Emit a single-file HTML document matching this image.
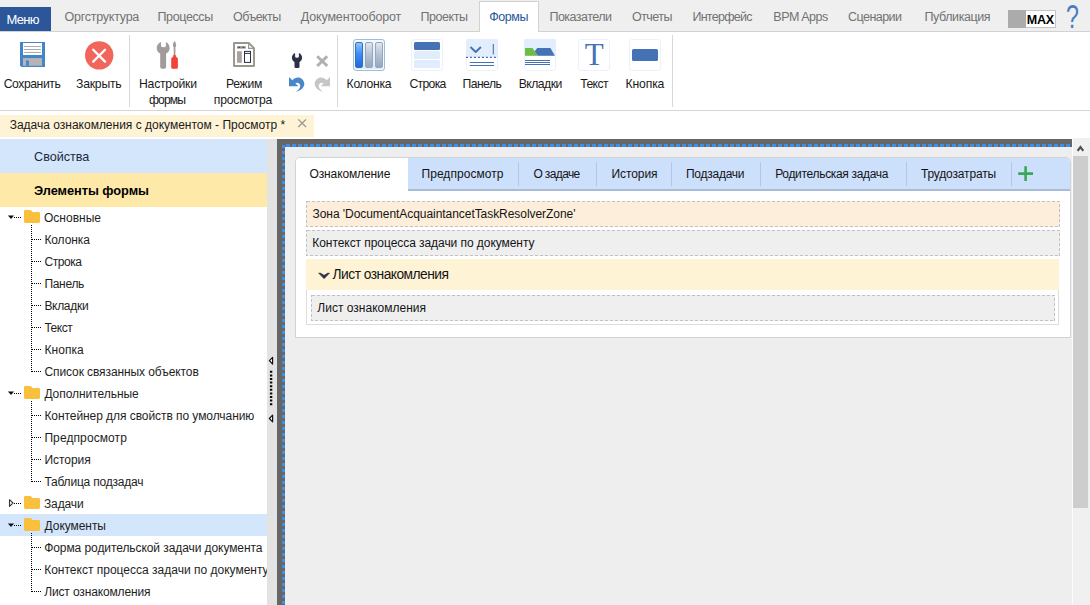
<!DOCTYPE html>
<html lang="ru">
<head>
<meta charset="utf-8">
<title>Задача ознакомления с документом - Просмотр</title>
<style>
*{box-sizing:border-box;margin:0;padding:0}
html,body{width:1090px;height:605px;overflow:hidden;background:#fff}
body{position:relative;font-family:"Liberation Sans",sans-serif;font-size:12px;color:#1e1e1e}
.a{position:absolute}
svg{position:absolute;overflow:visible}
.t{position:absolute;white-space:nowrap;line-height:normal}
#nav{left:0;top:0;width:1090px;height:32px;background:#efefef;border-bottom:1px solid #d2d2d2}
#menu{left:0;top:7px;width:51px;height:24px;background:#2b579a}
#actab{left:479px;top:1px;width:60px;height:31px;background:#fff;border:1px solid #d2d2d2;border-bottom:none}
#maxg{left:1008px;top:10px;width:48px;height:18px;background:#fff;border:1px solid #c4c4c4}
#maxg i{position:absolute;left:-1px;top:-1px;width:18px;height:18px;background:#ababab}
#rib{left:0;top:32px;width:1090px;height:79px;background:#fff;border-bottom:1px solid #d6d6d6}
.sep{top:35px;width:1px;height:72px;background:#d8d8d8}
.ib{top:39px;width:32px;height:32px;border:1px solid #ebf2fc;border-radius:3px;background:#fff;overflow:hidden}
#dtab{left:0;top:115px;width:314px;height:22px;background:#fff3d6}
#props{left:0;top:139px;width:267px;height:34px;background:#d4e6fc}
#elems{left:0;top:173px;width:267px;height:34px;background:#fee9a9}
#selrow{left:0;top:514px;width:267px;height:22px;background:#d4e6fc}
#split{left:267px;top:139px;width:10px;height:466px;background:#e3e3e3}
#cv{left:277px;top:139px;width:795px;height:466px;background:#eeeeee}
#sb{left:1072px;top:138px;width:18px;height:467px;background:#f0f0f0;border-left:1px solid #fcfcfc}
#sbth{left:1073px;top:156px;width:15px;height:351.6px;background:#cdcdcd}
#tp{left:295px;top:157px;width:776px;height:181px;background:#fff;border:1px solid #d0d3d8;border-radius:5px 5px 0 0}
#th{left:296px;top:158px;width:774px;height:33px;background:#cce0fc;border-bottom:2px solid #aabcd5;border-radius:4px 4px 0 0}
#ta{left:296px;top:158px;width:112px;height:33px;background:#fff;border-radius:4px 0 0 0}
.ts{top:162px;width:1px;height:24px;background:#b4c6e0}
.bx{left:306px;width:754px;height:26px}
</style>
</head>
<body>
<header>
<nav aria-label="Главное меню">
<div id="nav" class="a"></div>
<div id="menu" class="a"></div>
<div id="actab" class="a"></div>
<div id="maxg" class="a"><i></i></div>
<span class="t" id="t0" style="left:6.6px;top:12.00px;font-size:13px;color:#ffffff;letter-spacing:-0.714px;">Меню</span>
<span class="t" id="t1" style="left:64.5px;top:10.00px;font-size:12.5px;color:#727272;letter-spacing:-0.244px;">Оргструктура</span>
<span class="t" id="t2" style="left:157.5px;top:10.00px;font-size:12.5px;color:#727272;letter-spacing:-0.378px;">Процессы</span>
<span class="t" id="t3" style="left:233.0px;top:10.00px;font-size:12.5px;color:#727272;letter-spacing:-0.544px;">Объекты</span>
<span class="t" id="t4" style="left:300.8px;top:10.00px;font-size:12.5px;color:#727272;letter-spacing:-0.163px;">Документооборот</span>
<span class="t" id="t5" style="left:420.6px;top:10.00px;font-size:12.5px;color:#727272;letter-spacing:-0.462px;">Проекты</span>
<span class="t" id="t6" style="left:549.5px;top:10.00px;font-size:12.5px;color:#727272;letter-spacing:-0.535px;">Показатели</span>
<span class="t" id="t7" style="left:632.0px;top:10.00px;font-size:12.5px;color:#727272;letter-spacing:-0.544px;">Отчеты</span>
<span class="t" id="t8" style="left:692.4px;top:10.00px;font-size:12.5px;color:#727272;letter-spacing:-0.707px;">Интерфейс</span>
<span class="t" id="t9" style="left:773.3px;top:10.00px;font-size:12.5px;color:#727272;letter-spacing:-0.496px;">BPM Apps</span>
<span class="t" id="t10" style="left:848.0px;top:10.00px;font-size:12.5px;color:#727272;letter-spacing:-0.540px;">Сценарии</span>
<span class="t" id="t11" style="left:924.5px;top:10.00px;font-size:12.5px;color:#727272;letter-spacing:-0.418px;">Публикация</span>
<span class="t" id="t12" style="left:489.2px;top:10.00px;font-size:12.5px;color:#2b579a;letter-spacing:-0.425px;">Формы</span>
<span class="t" id="t13" style="left:1026.8px;top:13.00px;font-size:12.5px;color:#000;font-weight:700;letter-spacing:-0.191px;">MAX</span>
<span class="t" id="t14" style="left:1066.3px;top:-3.40px;font-size:34px;color:#4a7cc4;letter-spacing:0.000px;transform:scaleX(0.682);transform-origin:0 0;">?</span>
</nav>
<section aria-label="Лента">
<div id="rib" class="a"></div>
<div class="a sep" style="left:129px"></div>
<div class="a sep" style="left:337px"></div>
<div class="a sep" style="left:672px"></div>
<svg width="1090" height="112" viewBox="0 0 1090 112" style="left:0;top:0">
<g><path d="M20 42 H45 V67 H21.6 L20 65.4 Z" fill="#4285c8"/><rect x="23" y="43" width="19" height="12" fill="#fff"/><rect x="24.1" y="46" width="16.8" height="1" fill="#a9a9b0"/><rect x="24.1" y="49" width="16.8" height="1" fill="#a9a9b0"/><rect x="24.1" y="52" width="16.8" height="1" fill="#a9a9b0"/><rect x="23" y="58.1" width="19" height="7.7" fill="#b5b5b9"/><rect x="26.1" y="60.4" width="2.8" height="5.4" fill="#4285c8"/></g>
<g><circle cx="99.2" cy="55.35" r="14.2" fill="#f1655a"/><path d="M93.2 49.8 L105 61.6 M105 49.8 L93.2 61.6" stroke="#fff" stroke-width="2.3" stroke-linecap="round"/></g>
<g fill="#a19c9a"><path d="M161 41.9 C158.3 43 156.7 45.4 156.7 48 C156.7 50.6 158.2 52.6 160.2 53.6 L160.2 67 Q160.2 68.7 161.9 68.7 L164.4 68.7 Q166.1 68.7 166.1 67 L166.1 53.6 C168.1 52.6 169.7 50.6 169.7 48 C169.7 45.4 168.1 43 165.9 41.9 L165.9 45.8 Q165.9 47.3 163.45 47.3 Q161 47.3 161 45.8 Z"/><path d="M174.55 41 C175.6 42.5 176.3 44 176.2 45.2 C176.1 46.2 175.7 46.8 175.4 47.3 L175.4 55.2 L173.7 55.2 L173.7 47.3 C173.4 46.8 173 46.2 172.9 45.2 C172.8 44 173.5 42.5 174.55 41 Z"/></g><path d="M173.3 54.9 L175.8 54.9 L175.8 56.2 L177.9 58.6 L177.9 67.2 Q177.9 68.7 176.4 68.7 L172.7 68.7 Q171.2 68.7 171.2 67.2 L171.2 58.6 L173.3 56.2 Z" fill="#f44336"/>
<g><path d="M234 43 L248.8 43 L254 48.2 L254 66 L234 66 Z" fill="#fff" stroke="#9a968c" stroke-width="1.9" stroke-linejoin="round"/><path d="M248.6 43 L248.6 48.4 L254 48.4" fill="none" stroke="#9a968c" stroke-width="1.2" stroke-linejoin="round"/><rect x="237" y="46.1" width="8.8" height="2.5" fill="#9a968c"/><rect x="238.3" y="46.9" width="1.7" height="1" fill="#3a4270"/><rect x="242.6" y="46.9" width="1.7" height="1" fill="#3a4270"/><rect x="237" y="51.2" width="4.8" height="11.6" fill="#a8a3a0"/><rect x="244.5" y="51.4" width="6" height="11" fill="#fff" stroke="#2b2f4a" stroke-width="1"/><path d="M244.5 53.4 H250.5" stroke="#2b2f4a" stroke-width="1"/></g>
<path d="M295.1 53 C293.1 53.9 291.9 55.7 291.9 57.7 C291.9 59.6 293 61.1 294.5 61.9 L294.5 66.8 Q294.5 68 295.7 68 L298.3 68 Q299.5 68 299.5 66.8 L299.5 61.9 C301 61.1 302.1 59.6 302.1 57.7 C302.1 55.7 300.9 53.9 298.9 53 L298.9 56.6 Q298.9 57.8 297 57.8 Q295.1 57.8 295.1 56.6 Z" fill="#2d3047"/>
<path d="M317.2 56.2 L327.2 66 M327.2 56.2 L317.2 66" stroke="#b1b1b1" stroke-width="3"/>
<path d="M289 77 L289 86.3 L298.4 86.3 L295.3 83.2 C297.4 81.9 300 83 300.2 85.6 C300.4 88 298.6 90.2 296 91.7 C300.8 90.8 304.5 87.6 304.3 83.6 C304 78 297 74.8 292.3 80.3 Z" fill="#4a87c9"/>
<path d="M289 77 L289 86.3 L298.4 86.3 L295.3 83.2 C297.4 81.9 300 83 300.2 85.6 C300.4 88 298.6 90.2 296 91.7 C300.8 90.8 304.5 87.6 304.3 83.6 C304 78 297 74.8 292.3 80.3 Z" fill="#c6c6c6" transform="translate(619 0) scale(-1 1)"/>
</svg>
<div class="a ib" style="left:353px;background:linear-gradient(#f1f7fe,#dbeafb);border-color:#9ebdd9;border-radius:3px;box-shadow:inset 0 0 0 1px #f4f9ff"></div><div class="a" style="left:355px;top:42px;width:8px;height:26px;border-radius:2px;background:linear-gradient(#90c3ff,#3d8dfb 45%,#1f68db);border:1px solid #3c6fae"></div><div class="a" style="left:365px;top:42px;width:8px;height:26px;border-radius:2px;background:linear-gradient(#e0e6ed,#b4c1d2 50%,#94a8c1);border:1px solid #93a7bf"></div><div class="a" style="left:375px;top:42px;width:8px;height:26px;border-radius:2px;background:linear-gradient(#e0e6ed,#b4c1d2 50%,#94a8c1);border:1px solid #93a7bf"></div>
<div class="a ib" style="left:411px"></div><div class="a" style="left:414px;top:42px;width:26px;height:8px;border-radius:1.5px;background:#4472b4"></div><div class="a" style="left:414px;top:51.2px;width:26px;height:7.7px;border-radius:1.5px;background:#e1edfc"></div><div class="a" style="left:414px;top:60.1px;width:26px;height:7.7px;border-radius:1.5px;background:#e1edfc"></div>
<div class="a ib" style="left:466px"></div><div class="a" style="left:466px;top:39px;width:32px;height:18px;background:#e3eefc;border-radius:2px 2px 0 0"></div><svg width="32" height="32" viewBox="0 0 32 32" style="left:466px;top:39px"><path d="M4.5 8 L9.7 13 L14.9 8" fill="none" stroke="#4472b4" stroke-width="1.9" stroke-linejoin="round"/><path d="M27.3 5 V15.5" stroke="#4472b4" stroke-width="1.1"/><path d="M-0.1 18.3 H32" stroke="#3f6db0" stroke-width="1.2" stroke-dasharray="2 2"/><path d="M3.8 23.5 H28 M3.8 26.5 H28" stroke="#4472b4" stroke-width="1.2"/></svg>
<div class="a ib" style="left:524px"></div><div class="a" style="left:524px;top:39px;width:32px;height:17px;background:#e3eefc;border-radius:2px 2px 0 0"></div><svg width="32" height="32" viewBox="0 0 32 32" style="left:524px;top:39px"><path d="M1 8.9 H8.5 L13.9 16.7 H1 Z" fill="#6cbd45"/><path d="M13.3 8.9 H26.4 L30.9 16.7 H13.9 L10.7 12.2 Z" fill="#4472b4"/><path d="M1 21.5 H25.8 M1 23.5 H25.8 M1 25.5 H25.8" stroke="#4472b4" stroke-width="1" shape-rendering="crispEdges"/></svg>
<div class="a ib" style="left:578px"></div>
<div class="a ib" style="left:629px"></div><div class="a" style="left:632px;top:49px;width:26px;height:12px;border-radius:1.5px;background:#4472b4"></div>
<span class="t" id="t15" style="left:3.7px;top:77.00px;font-size:12.2px;color:#1a1a1a;letter-spacing:-0.433px;">Сохранить</span>
<span class="t" id="t16" style="left:76.0px;top:77.00px;font-size:12.2px;color:#1a1a1a;letter-spacing:-0.209px;">Закрыть</span>
<span class="t" id="t17" style="left:139.0px;top:77.00px;font-size:12.2px;color:#1a1a1a;letter-spacing:-0.221px;">Настройки</span>
<span class="t" id="t18" style="left:149.0px;top:93.00px;font-size:12.2px;color:#1a1a1a;letter-spacing:-0.934px;">формы</span>
<span class="t" id="t19" style="left:226.0px;top:77.00px;font-size:12.2px;color:#1a1a1a;letter-spacing:-0.320px;">Режим</span>
<span class="t" id="t20" style="left:213.8px;top:93.00px;font-size:12.2px;color:#1a1a1a;letter-spacing:-0.223px;">просмотра</span>
<span class="t" id="t21" style="left:346.6px;top:77.00px;font-size:12.2px;color:#1a1a1a;letter-spacing:-0.308px;">Колонка</span>
<span class="t" id="t22" style="left:409.4px;top:77.00px;font-size:12.2px;color:#1a1a1a;letter-spacing:-0.666px;">Строка</span>
<span class="t" id="t23" style="left:462.6px;top:77.00px;font-size:12.2px;color:#1a1a1a;letter-spacing:-0.582px;">Панель</span>
<span class="t" id="t24" style="left:518.7px;top:77.00px;font-size:12.2px;color:#1a1a1a;letter-spacing:-0.525px;">Вкладки</span>
<span class="t" id="t25" style="left:580.2px;top:77.00px;font-size:12.2px;color:#1a1a1a;letter-spacing:-0.572px;">Текст</span>
<span class="t" id="t26" style="left:625.5px;top:77.00px;font-size:12.2px;color:#1a1a1a;letter-spacing:-0.139px;">Кнопка</span>
<span class="t" id="t27" style="left:584.8px;top:37.00px;font-size:31px;color:#4472b4;font-family:'Liberation Serif',serif;letter-spacing:0.000px;">T</span>
</section>
<div id="dtab" class="a"></div>
<span class="t" id="t28" style="left:9.7px;top:118.00px;font-size:12px;color:#1a1a1a;letter-spacing:-0.004px;">Задача ознакомления с документом - Просмотр *</span>
</header>
<aside aria-label="Элементы формы">
<div id="props" class="a"></div>
<div id="elems" class="a"></div>
<div id="selrow" class="a"></div>
<svg width="267" height="466" viewBox="0 139 267 466" style="left:0;top:139px" shape-rendering="crispEdges">
<path shape-rendering="auto" d="M25.2 210 H30 Q30.8 210 31.3 210.6 L32.4 212 H38.6 Q40 212 40 213.4 V221.6 Q40 223 38.6 223 H25.4 Q24 223 24 221.6 V211.2 Q24 210 25.2 210 Z" fill="#f9c03d"/>
<path d="M14 217.5 H21" stroke="#000" stroke-width="1" stroke-dasharray="1 1"/>
<path shape-rendering="auto" d="M7.9 215.4 H14.1 L11 219 Z" fill="#111"/>
<path shape-rendering="auto" d="M25.2 386 H30 Q30.8 386 31.3 386.6 L32.4 388 H38.6 Q40 388 40 389.4 V397.6 Q40 399 38.6 399 H25.4 Q24 399 24 397.6 V387.2 Q24 386 25.2 386 Z" fill="#f9c03d"/>
<path d="M14 393.5 H21" stroke="#000" stroke-width="1" stroke-dasharray="1 1"/>
<path shape-rendering="auto" d="M7.9 391.4 H14.1 L11 395 Z" fill="#111"/>
<path shape-rendering="auto" d="M25.2 496 H30 Q30.8 496 31.3 496.6 L32.4 498 H38.6 Q40 498 40 499.4 V507.6 Q40 509 38.6 509 H25.4 Q24 509 24 507.6 V497.2 Q24 496 25.2 496 Z" fill="#f9c03d"/>
<path d="M14 503.5 H21" stroke="#000" stroke-width="1" stroke-dasharray="1 1"/>
<path shape-rendering="auto" d="M9.5 499.7 L13 503 L9.5 506.3 Z" fill="#fff" stroke="#333" stroke-width="1.1" stroke-linejoin="round"/>
<path shape-rendering="auto" d="M25.2 518 H30 Q30.8 518 31.3 518.6 L32.4 520 H38.6 Q40 520 40 521.4 V529.6 Q40 531 38.6 531 H25.4 Q24 531 24 529.6 V519.2 Q24 518 25.2 518 Z" fill="#f9c03d"/>
<path d="M14 525.5 H21" stroke="#000" stroke-width="1" stroke-dasharray="1 1"/>
<path shape-rendering="auto" d="M7.9 523.4 H14.1 L11 527 Z" fill="#111"/>
<path d="M31.5 225 V372" stroke="#000" stroke-width="1" stroke-dasharray="1 1"/>
<path d="M32 239.5 H41" stroke="#000" stroke-width="1" stroke-dasharray="1 1"/>
<path d="M32 261.5 H41" stroke="#000" stroke-width="1" stroke-dasharray="1 1"/>
<path d="M32 283.5 H41" stroke="#000" stroke-width="1" stroke-dasharray="1 1"/>
<path d="M32 305.5 H41" stroke="#000" stroke-width="1" stroke-dasharray="1 1"/>
<path d="M32 327.5 H41" stroke="#000" stroke-width="1" stroke-dasharray="1 1"/>
<path d="M32 349.5 H41" stroke="#000" stroke-width="1" stroke-dasharray="1 1"/>
<path d="M32 371.5 H41" stroke="#000" stroke-width="1" stroke-dasharray="1 1"/>
<path d="M31.5 401 V482" stroke="#000" stroke-width="1" stroke-dasharray="1 1"/>
<path d="M32 415.5 H41" stroke="#000" stroke-width="1" stroke-dasharray="1 1"/>
<path d="M32 437.5 H41" stroke="#000" stroke-width="1" stroke-dasharray="1 1"/>
<path d="M32 459.5 H41" stroke="#000" stroke-width="1" stroke-dasharray="1 1"/>
<path d="M32 481.5 H41" stroke="#000" stroke-width="1" stroke-dasharray="1 1"/>
<path d="M31.5 533 V592" stroke="#000" stroke-width="1" stroke-dasharray="1 1"/>
<path d="M32 547.5 H41" stroke="#000" stroke-width="1" stroke-dasharray="1 1"/>
<path d="M32 569.5 H41" stroke="#000" stroke-width="1" stroke-dasharray="1 1"/>
<path d="M32 591.5 H41" stroke="#000" stroke-width="1" stroke-dasharray="1 1"/>
</svg>
<span class="t" id="t29" style="left:34.1px;top:150.00px;font-size:12.6px;color:#1e2a3a;letter-spacing:-0.030px;">Свойства</span>
<span class="t" id="t30" style="left:34.1px;top:183.00px;font-size:12.8px;color:#000;font-weight:700;letter-spacing:-0.058px;">Элементы формы</span>
<span class="t" id="t31" style="left:44.0px;top:210.60px;font-size:12px;color:#1e1e1e;letter-spacing:0.009px;">Основные</span>
<span class="t" id="t32" style="left:44.4px;top:232.60px;font-size:12px;color:#1e1e1e;letter-spacing:-0.089px;">Колонка</span>
<span class="t" id="t33" style="left:44.4px;top:254.60px;font-size:12px;color:#1e1e1e;letter-spacing:-0.421px;">Строка</span>
<span class="t" id="t34" style="left:44.4px;top:276.60px;font-size:12px;color:#1e1e1e;letter-spacing:-0.294px;">Панель</span>
<span class="t" id="t35" style="left:44.4px;top:298.60px;font-size:12px;color:#1e1e1e;letter-spacing:-0.305px;">Вкладки</span>
<span class="t" id="t36" style="left:44.4px;top:320.60px;font-size:12px;color:#1e1e1e;letter-spacing:-0.480px;">Текст</span>
<span class="t" id="t37" style="left:44.4px;top:342.60px;font-size:12px;color:#1e1e1e;letter-spacing:0.083px;">Кнопка</span>
<span class="t" id="t38" style="left:44.4px;top:364.60px;font-size:12px;color:#1e1e1e;letter-spacing:-0.088px;">Список связанных объектов</span>
<span class="t" id="t39" style="left:44.4px;top:386.60px;font-size:12px;color:#1e1e1e;letter-spacing:-0.046px;">Дополнительные</span>
<span class="t" id="t40" style="left:44.4px;top:408.60px;font-size:12px;color:#1e1e1e;letter-spacing:-0.062px;">Контейнер для свойств по умолчанию</span>
<span class="t" id="t41" style="left:44.4px;top:430.60px;font-size:12px;color:#1e1e1e;letter-spacing:0.101px;">Предпросмотр</span>
<span class="t" id="t42" style="left:44.4px;top:452.60px;font-size:12px;color:#1e1e1e;letter-spacing:-0.041px;">История</span>
<span class="t" id="t43" style="left:44.4px;top:474.60px;font-size:12px;color:#1e1e1e;letter-spacing:-0.196px;">Таблица подзадач</span>
<span class="t" id="t44" style="left:44.0px;top:496.60px;font-size:12px;color:#1e1e1e;letter-spacing:-0.139px;">Задачи</span>
<span class="t" id="t45" style="left:44.6px;top:518.60px;font-size:12px;color:#1e1e1e;letter-spacing:-0.057px;">Документы</span>
<span class="t" id="t46" style="left:44.2px;top:540.60px;font-size:12px;color:#1e1e1e;letter-spacing:-0.077px;">Форма родительской задачи документа</span>
<span class="t" id="t47" style="left:44.2px;top:562.60px;font-size:12px;color:#1e1e1e;letter-spacing:0.003px;width:222.8px;overflow:hidden;">Контекст процесса задачи по документу</span>
<span class="t" id="t48" style="left:44.2px;top:584.60px;font-size:12px;color:#1e1e1e;letter-spacing:-0.141px;">Лист ознакомления</span>
</aside>
<div id="split" class="a"></div>
<main>
<div id="cv" class="a"></div>
<div class="a" style="left:277px;top:139px;width:795px;height:8px;background:#666"></div>
<div class="a" style="left:277px;top:139px;width:8px;height:466px;background:#666"></div>
<div class="a" style="left:286px;top:144px;width:786px;height:3px;background:repeating-linear-gradient(90deg,#3d8fe9 0,#3d8fe9 3.7px,transparent 3.7px,transparent 6px)"></div>
<div class="a" style="left:282px;top:145px;width:3px;height:460px;background:repeating-linear-gradient(180deg,#3d8fe9 0,#3d8fe9 3.2px,transparent 3.2px,transparent 6px)"></div>
<div id="sb" class="a"></div>
<div id="sbth" class="a"></div>
<div id="tp" class="a"></div>
<div id="th" class="a"></div>
<div id="ta" class="a"></div>
<div class="a ts" style="left:518px"></div>
<div class="a ts" style="left:596px"></div>
<div class="a ts" style="left:671px"></div>
<div class="a ts" style="left:760px"></div>
<div class="a ts" style="left:906px"></div>
<div class="a ts" style="left:1011px"></div>
<div class="a bx" style="top:201px;background:#fdeedb"></div>
<div class="a bx" style="top:230px;background:#efefef"></div>
<div class="a" style="left:306px;top:259px;width:753px;height:31px;background:#fff3d6"></div>
<div class="a" style="left:306px;top:290px;width:753px;height:35px;background:#fff;border:1px solid #dedede;border-top:none"></div>
<div class="a" style="left:311px;top:295px;width:744px;height:26px;background:#efefef"></div>
<svg width="760" height="130" viewBox="305 200 760 130" style="left:305px;top:200px" shape-rendering="crispEdges" fill="none" stroke="#c2c2c2" stroke-dasharray="3 2"><rect x="306.5" y="201.5" width="753" height="25"/><rect x="306.5" y="230.5" width="753" height="25"/><rect x="311.5" y="295.5" width="743" height="25"/></svg>
<svg width="10" height="466" viewBox="267 139 10 466" style="left:267px;top:139px"><path d="M272.6 357.3 L269.4 360.6 L272.6 364 Z M272.6 415.2 L269.4 418.5 L272.6 421.8 Z" fill="#fff" stroke="#111" stroke-width="1.2" stroke-linejoin="round"/><path d="M271.1 370.8 V405.3" stroke="#080808" stroke-width="2.4" stroke-dasharray="2 1.6"/></svg>
<svg width="18" height="17" viewBox="1072 139 18 17" style="left:1072px;top:139px"><path d="M1077.6 150.9 L1080.45 147 L1083.3 150.9" fill="none" stroke="#505050" stroke-width="2.2"/></svg>
<svg width="12" height="12" viewBox="296 117 12 12" style="left:296px;top:117px"><path d="M298.3 119.4 L306 127 M306 119.4 L298.3 127" stroke="#969696" stroke-width="1.3"/></svg>
<svg width="14" height="10" viewBox="317 271 14 10" style="left:317px;top:271px"><path d="M318.6 273.1 L320.4 273.1 L324.1 275.3 L327.8 273.1 L329.6 273.1 L324.1 278.8 Z" fill="#2d3047" stroke="#2d3047" stroke-width="0.5" stroke-linejoin="round"/></svg>
<svg width="18" height="18" viewBox="1017 165 18 18" style="left:1017px;top:165px"><path d="M1025.6 166.2 V181 M1018.2 173.6 H1033" stroke="#3aa757" stroke-width="2.6"/></svg>
<span class="t" id="t49" style="left:309.5px;top:167.00px;font-size:12px;color:#141414;letter-spacing:-0.120px;">Ознакомление</span>
<span class="t" id="t50" style="left:421.5px;top:167.00px;font-size:12px;color:#141414;letter-spacing:0.046px;">Предпросмотр</span>
<span class="t" id="t51" style="left:533.4px;top:167.00px;font-size:12px;color:#141414;letter-spacing:-0.613px;">О задаче</span>
<span class="t" id="t52" style="left:611.4px;top:167.00px;font-size:12px;color:#141414;letter-spacing:-0.058px;">История</span>
<span class="t" id="t53" style="left:686.0px;top:167.00px;font-size:12px;color:#141414;letter-spacing:-0.262px;">Подзадачи</span>
<span class="t" id="t54" style="left:775.2px;top:167.00px;font-size:12px;color:#141414;letter-spacing:-0.318px;">Родительская задача</span>
<span class="t" id="t55" style="left:920.9px;top:167.00px;font-size:12px;color:#141414;letter-spacing:-0.150px;">Трудозатраты</span>
<span class="t" id="t56" style="left:312.5px;top:206.60px;font-size:12px;color:#141414;letter-spacing:-0.053px;">Зона 'DocumentAcquaintancetTaskResolverZone'</span>
<span class="t" id="t57" style="left:312.3px;top:236.00px;font-size:12px;color:#141414;letter-spacing:-0.058px;">Контекст процесса задачи по документу</span>
<span class="t" id="t58" style="left:332.6px;top:267.40px;font-size:13.8px;color:#141414;letter-spacing:-0.527px;">Лист ознакомления</span>
<span class="t" id="t59" style="left:317.3px;top:301.00px;font-size:12px;color:#141414;letter-spacing:0.009px;">Лист ознакомления</span>
</main>
</body>
</html>
